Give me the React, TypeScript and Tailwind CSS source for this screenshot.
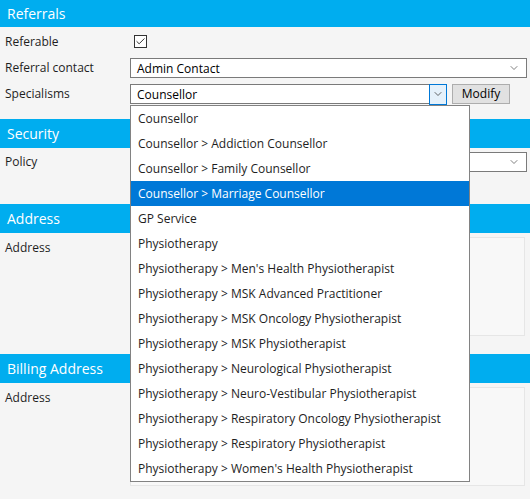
import { Check, ChevronDown } from "lucide-react";

const specialisms = [
  "Counsellor",
  "Counsellor > Addiction Counsellor",
  "Counsellor > Family Counsellor",
  "Counsellor > Marriage Counsellor",
  "GP Service",
  "Physiotherapy",
  "Physiotherapy > Men's Health Physiotherapist",
  "Physiotherapy > MSK Advanced Practitioner",
  "Physiotherapy > MSK Oncology Physiotherapist",
  "Physiotherapy > MSK Physiotherapist",
  "Physiotherapy > Neurological Physiotherapist",
  "Physiotherapy > Neuro-Vestibular Physiotherapist",
  "Physiotherapy > Respiratory Oncology Physiotherapist",
  "Physiotherapy > Respiratory Physiotherapist",
  "Physiotherapy > Women's Health Physiotherapist",
];

const selected = "Counsellor > Marriage Counsellor";

function SectionHeader({ title, tall }: { title: string; tall?: boolean }) {
  return (
    <div
      className={`flex items-center bg-[#00adef] px-[7px] text-[14px] text-white ${
        tall ? "h-[29px]" : "h-[27px]"
      }`}
    >
      {title}
    </div>
  );
}

function Label({ children }: { children: string }) {
  return <div className="w-[130px] shrink-0 pl-[5px] text-[12px] text-[#1e1e1e]">{children}</div>;
}

function Select({ value, focused }: { value: string; focused?: boolean }) {
  return (
    <div className="flex h-[20px] flex-1 items-center border border-[#7a7a7a] bg-white pl-[6px] text-[12px] text-black">
      <span className="flex-1 pt-px">{value}</span>
      {focused ? (
        <span className="-my-px -mr-px flex h-[21px] w-[18px] items-center justify-center border border-[#0078d7] bg-[#e5f1fb]">
          <ChevronDown className="h-[12px] w-[12px] text-[#333]" strokeWidth={1.5} />
        </span>
      ) : (
        <ChevronDown className="mr-[6px] h-[12px] w-[12px] text-[#555]" strokeWidth={1.5} />
      )}
    </div>
  );
}

export default function App() {
  return (
    <div
      className="relative h-[499px] w-[530px] overflow-hidden bg-[#f5f5f5]"
      style={{ fontFamily: '"Open Sans", "Noto Sans", sans-serif' }}
    >
      {/* Referrals */}
      <SectionHeader title="Referrals" />
      <div className="flex flex-col gap-[6px] pb-[15px] pr-[3px] pt-[4px]">
        <div className="flex h-[21px] items-center">
          <Label>Referable</Label>
          <span className="ml-[4px] flex h-[13px] w-[13px] items-center justify-center border border-[#333] bg-white">
            <Check className="h-[11px] w-[11px] text-[#222]" strokeWidth={2} />
          </span>
        </div>
        <div className="flex items-center">
          <Label>Referral contact</Label>
          <Select value="Admin Contact" />
        </div>
        <div className="flex items-center">
          <Label>Specialisms</Label>
          <div className="flex flex-1 items-center pr-[17px]">
            <Select value="Counsellor" focused />
            <button className="ml-[5px] h-[20px] w-[58px] border border-[#adadad] bg-[#e1e1e1] text-[12px] text-black">
              Modify
            </button>
          </div>
        </div>
      </div>

      {/* Security */}
      <SectionHeader title="Security" tall />
      <div className="pb-[32px] pr-[3px] pt-[4px]">
        <div className="flex items-center">
          <Label>Policy</Label>
          <Select value="" />
        </div>
      </div>

      {/* Address */}
      <SectionHeader title="Address" tall />
      <div className="flex items-start pb-[18px] pr-[5px] pt-[4px]">
        <div className="pt-[2px]">
          <Label>Address</Label>
        </div>
        <div className="h-[99px] flex-1 border border-[#e6e6e6] bg-[#f8f8f8]" />
      </div>

      {/* Billing Address */}
      <SectionHeader title="Billing Address" tall />
      <div className="flex items-start pr-[5px] pt-[4px]">
        <div className="pt-[2px]">
          <Label>Address</Label>
        </div>
        <div className="h-[99px] flex-1 border border-[#e6e6e6] bg-[#f8f8f8]" />
      </div>

      {/* open specialisms list */}
      <ul className="absolute left-[130px] top-[105px] w-[340px] border border-[#828282] bg-white">
        {specialisms.map((s) => (
          <li
            key={s}
            className={`flex h-[25px] items-center pl-[7px] text-[12px] ${
              s === selected ? "bg-[#0078d7] text-white" : "text-[#1e1e1e]"
            }`}
          >
            {s}
          </li>
        ))}
      </ul>
    </div>
  );
}
